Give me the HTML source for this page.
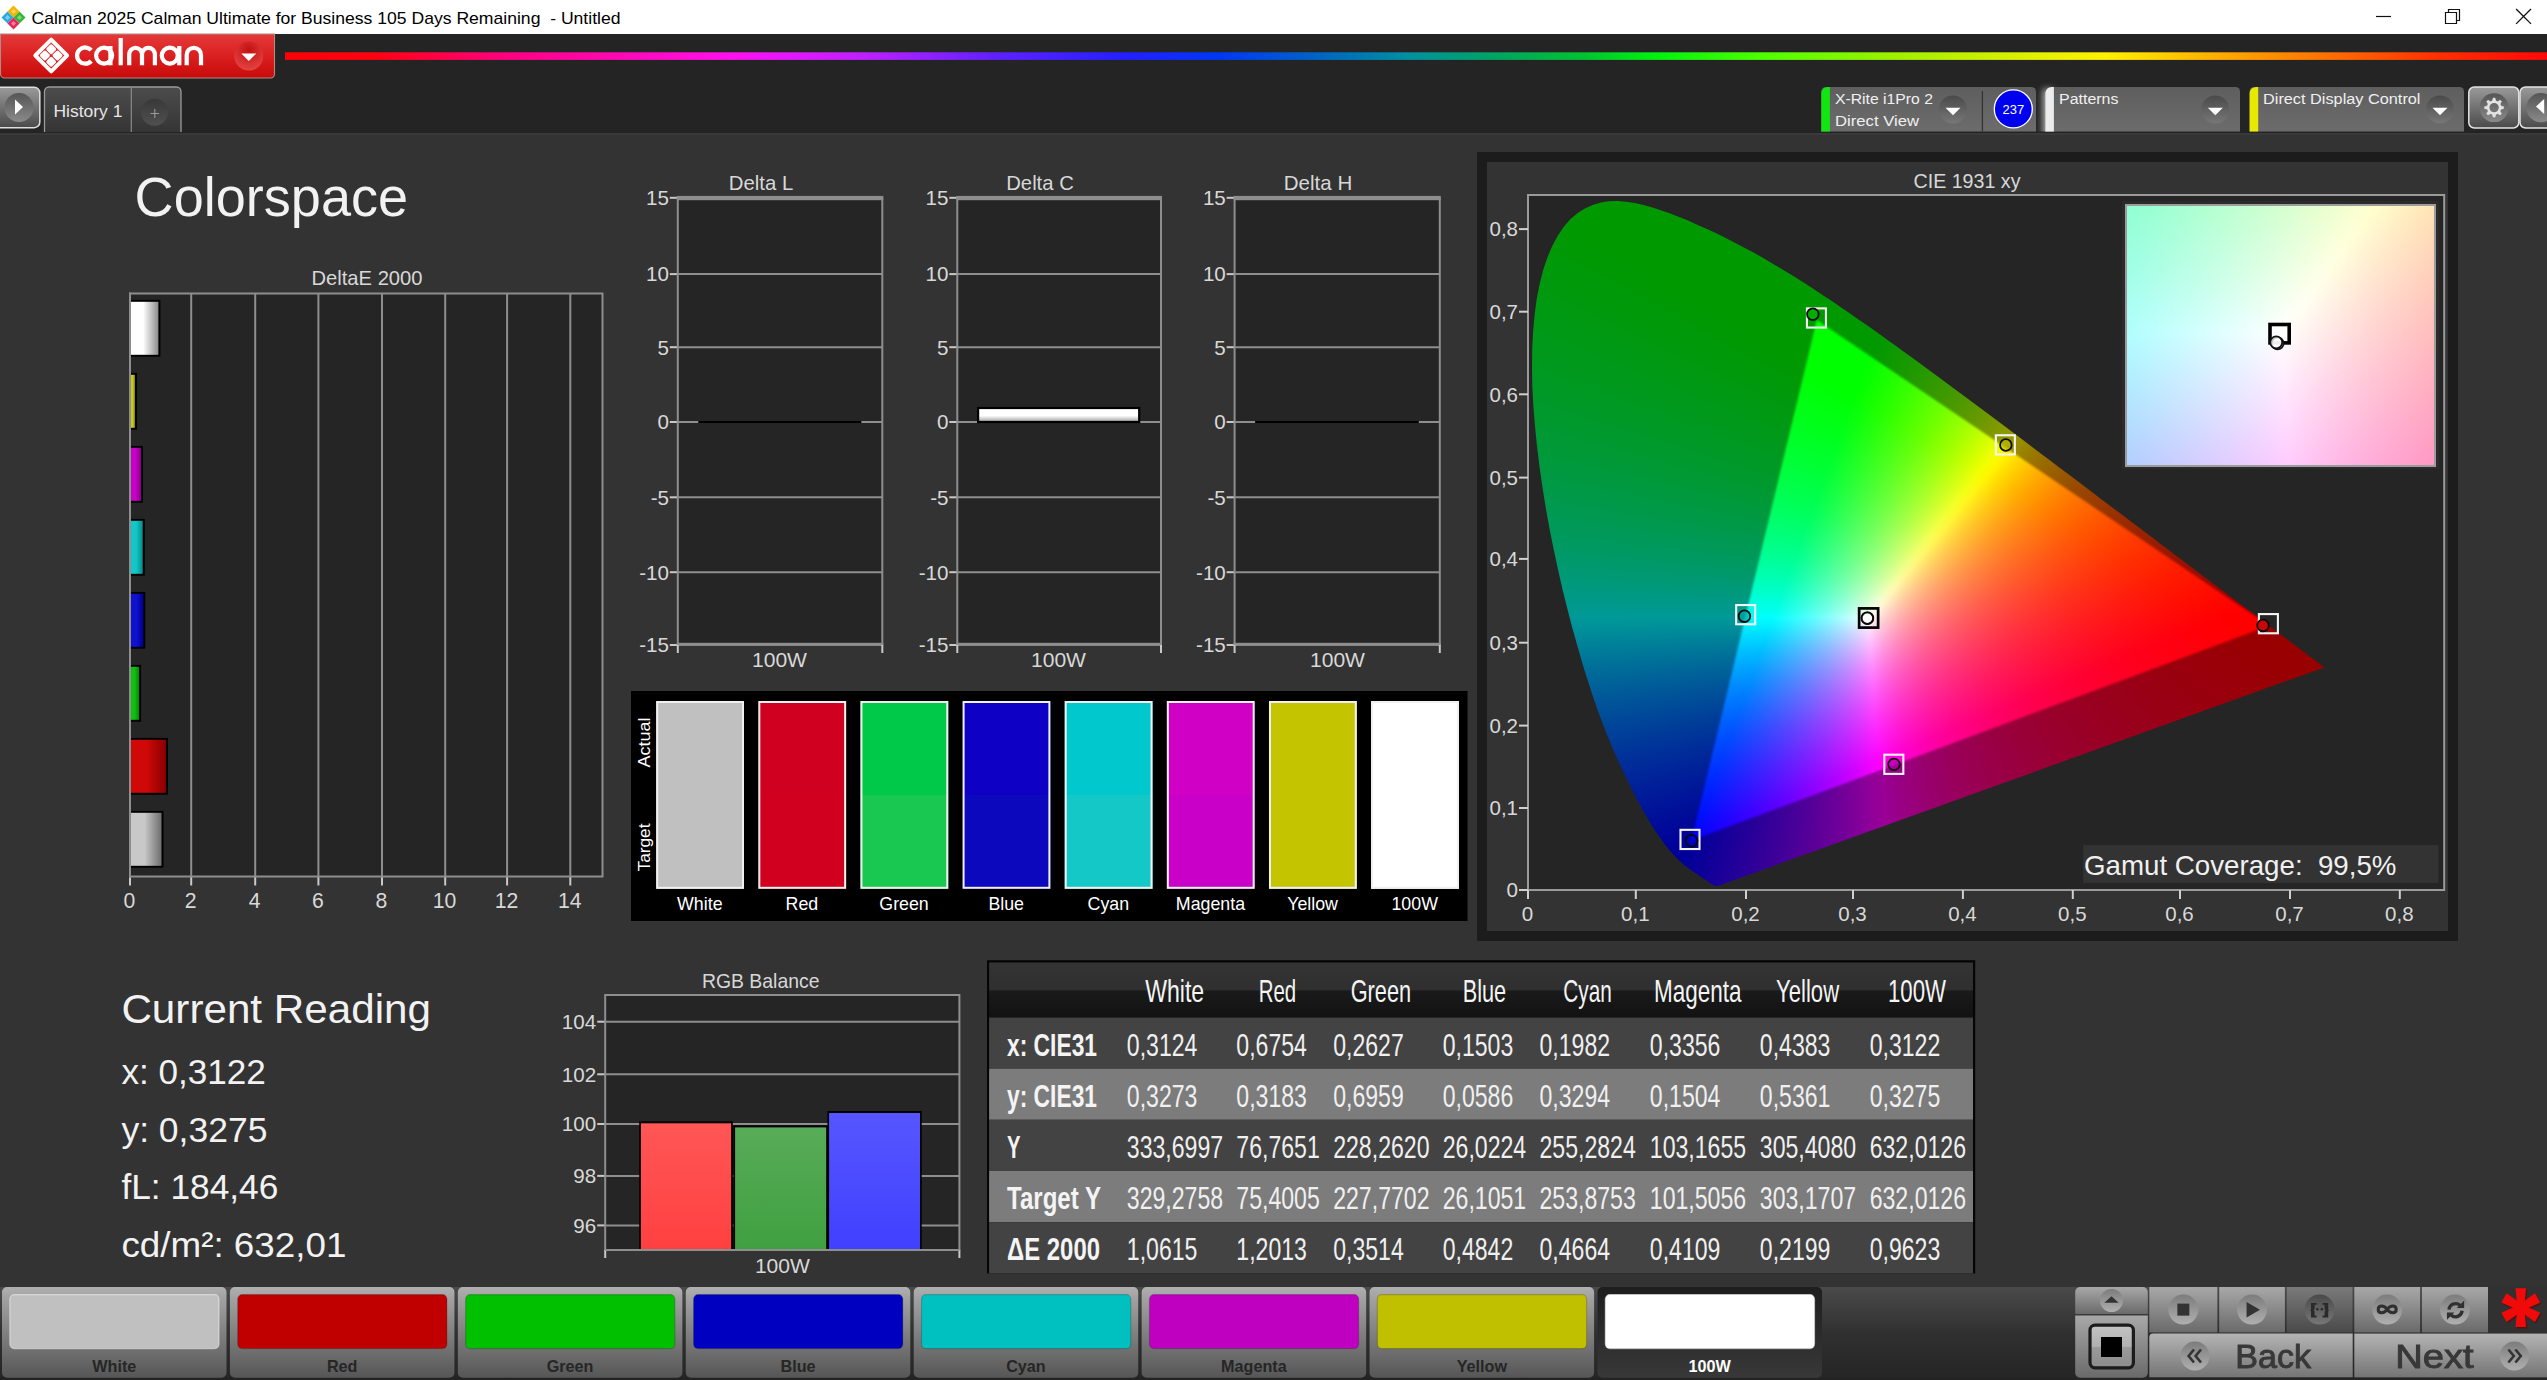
<!DOCTYPE html>
<html><head><meta charset="utf-8"><title>Calman</title>
<style>
html,body{margin:0;padding:0;background:#333;}
body{width:2547px;height:1380px;position:relative;overflow:hidden;font-family:"Liberation Sans", sans-serif;}
#bg div{position:absolute;box-sizing:border-box;}
.cie{background:conic-gradient(at 163.5px 645.4px,#00ffff 0deg,#00ffff 20deg,#08ffff 21deg,#26ffff 24deg,#48ffff 27deg,#6dffff 30deg,#8affff 32deg,#a9ffff 34deg,#ccffff 36deg,#f2ffff 38deg,#ffffff 39deg,#ffffff 200deg,#00ffff 201deg,#00ffff 360deg),conic-gradient(at 327.0px 199.4px,#00ffff 0deg,#00ffff 20deg,#ffffff 21deg,#ffffff 176deg,#f8ffff 177deg,#c6ffff 181deg,#98ffff 185deg,#63ffff 190deg,#27ffff 196deg,#01ffff 200deg,#00ffff 201deg,#00ffff 360deg),conic-gradient(at 163.5px 645.4px,#ffffff 0deg,#ffffff 38deg,#fff6ff 39deg,#ffe3ff 40deg,#ffd1ff 41deg,#ffc1ff 42deg,#ffa4ff 44deg,#ff8cff 46deg,#ff77ff 48deg,#ff5cff 51deg,#ff46ff 54deg,#ff32ff 57deg,#ff1cff 61deg,#ff05ff 66deg,#ff01ff 67deg,#ff00ff 68deg,#ff00ff 247deg,#ffffff 248deg,#ffffff 360deg),conic-gradient(at 697.6px 422.4px,#ffffff 0deg,#ffffff 67deg,#ff00ff 68deg,#ff00ff 247deg,#ff05ff 248deg,#ff25ff 252deg,#ff49ff 256deg,#ff68ff 259deg,#ff8aff 262deg,#ffa4ff 264deg,#ffc0ff 266deg,#ffdfff 268deg,#fff0ff 269deg,#ffffff 270deg,#ffffff 360deg),conic-gradient(at 327.0px 199.4px,#ffff00 0deg,#ffff00 121deg,#ffff1e 134deg,#ffff37 143deg,#ffff4e 150deg,#ffff66 156deg,#ffff7f 161deg,#ffff96 165deg,#ffffab 168deg,#ffffc4 171deg,#ffffd7 173deg,#ffffed 175deg,#fffff9 176deg,#ffffff 177deg,#ffffff 301deg,#ffff00 302deg,#ffff00 360deg),conic-gradient(at 697.6px 422.4px,#ffff00 0deg,#ffff00 121deg,#ffffff 122deg,#ffffff 269deg,#fffffd 270deg,#ffffeb 271deg,#ffffcd 273deg,#ffffb2 275deg,#ffff9b 277deg,#ffff7e 280deg,#ffff64 283deg,#ffff4e 286deg,#ffff35 290deg,#ffff1b 295deg,#ffff00 301deg,#ffff00 360deg),#fff;background-blend-mode:darken;}
.cie2{background:conic-gradient(at -945.8px 1657.2px,#00ffff 0deg,#00ffff 18.2deg,#15ffff 20.2deg,#2effff 22.5deg,#46ffff 24.5deg,#60ffff 26.5deg,#79ffff 28.2deg,#94ffff 30deg,#adffff 31.5deg,#c8ffff 33deg,#e0ffff 34.2deg,#fbffff 35.5deg,#ffffff 35.8deg,#ffffff 198.2deg,#00ffff 198.5deg,#00ffff 360deg),conic-gradient(at 67.3px -1412.3px,#00ffff 0deg,#00ffff 18.2deg,#ffffff 18.5deg,#ffffff 176.8deg,#fcffff 177deg,#d9ffff 179.5deg,#b4ffff 182.2deg,#8fffff 185.2deg,#69ffff 188.5deg,#3fffff 192.2deg,#12ffff 196.5deg,#00ffff 198.2deg,#00ffff 360deg),conic-gradient(at -945.8px 1657.2px,#ffffff 0deg,#ffffff 35.5deg,#fffeff 35.8deg,#ffe9ff 36.8deg,#ffd6ff 37.8deg,#ffc5ff 38.8deg,#ffb2ff 40deg,#ffa1ff 41.2deg,#ff8fff 42.8deg,#ff7fff 44.2deg,#ff6eff 46deg,#ff5cff 48deg,#ff4bff 50.2deg,#ff3bff 52.8deg,#ff2bff 55.5deg,#ff1bff 58.8deg,#ff0aff 62.5deg,#ff00ff 65deg,#ff00ff 65.5deg,#ff00ff 245deg,#ffffff 245.2deg,#ffffff 360deg),conic-gradient(at 2363.8px 122.4px,#ffffff 0deg,#ffffff 65deg,#ff00ff 65.2deg,#ff00ff 245deg,#ff01ff 245.2deg,#ff1cff 249deg,#ff36ff 252.2deg,#ff50ff 255.2deg,#ff6aff 258deg,#ff84ff 260.5deg,#ff9dff 262.8deg,#ffb5ff 264.8deg,#ffd0ff 266.8deg,#ffeaff 268.5deg,#fffdff 269.8deg,#ffffff 270deg,#ffffff 360deg),conic-gradient(at 67.3px -1412.3px,#ffff00 0deg,#ffff00 123.8deg,#ffff14 132.8deg,#ffff26 139.8deg,#ffff36 145.5deg,#ffff46 150.2deg,#ffff56 154.5deg,#ffff66 158deg,#ffff76 161.2deg,#ffff86 164deg,#ffff96 166.5deg,#ffffa7 168.8deg,#ffffb9 170.8deg,#ffffca 172.5deg,#ffffda 174deg,#ffffed 175.5deg,#fffffe 176.8deg,#ffffff 177deg,#ffffff 303.8deg,#ffff00 304deg,#ffff00 360deg),conic-gradient(at 2363.8px 122.4px,#ffff00 0deg,#ffff00 123.8deg,#ffffff 124deg,#ffffff 269.8deg,#fffffd 270deg,#ffffe9 271.2deg,#ffffd4 272.8deg,#ffffc2 274.2deg,#ffffae 276deg,#ffff99 278deg,#ffff85 280.2deg,#ffff72 282.5deg,#ffff5e 285.2deg,#ffff4b 288.2deg,#ffff38 291.5deg,#ffff25 295.2deg,#ffff11 299.5deg,#ffff00 303.8deg,#ffff00 360deg),#fff;background-blend-mode:darken;}
svg{position:absolute;left:0;top:0;}
svg text{font-family:"Liberation Sans", sans-serif;white-space:pre;}
</style></head><body>
<div id="bg">
<div style="left:0px;top:0px;width:2547px;height:34px;background:#ffffff"></div>
<div style="left:0px;top:34px;width:2547px;height:99.2px;background:#242424"></div>
<div style="left:0px;top:133.2px;width:2547px;height:1246.8px;background:#333333"></div>
<div style="left:0px;top:133.2px;width:2547px;height:1.6px;background:#393939"></div>
<div style="left:1477.2px;top:152.2px;width:981px;height:788.6px;background:#1c1c1c"></div>
<div style="left:1486.8px;top:161.8px;width:961.7px;height:768.8px;background:#333333"></div>
<div style="left:1528px;top:195px;width:917px;height:696px;background:#252525"></div>
<div style="left:1528px;top:195px;width:917px;height:696px;filter:blur(0.7px) brightness(0.6);overflow:hidden;"><div class="cie" style="left:0;top:0;width:917px;height:696px;clip-path:polygon(189.8px 690.9px,189.8px 690.9px,189.7px 690.9px,189.7px 690.9px,189.7px 690.9px,189.7px 690.9px,189.6px 690.9px,189.6px 690.9px,189.5px 690.9px,189.5px 690.9px,189.4px 690.9px,189.4px 690.9px,189.3px 690.9px,189.3px 690.9px,189.2px 690.9px,189.2px 690.9px,189.1px 691.0px,189.1px 691.0px,189.0px 691.0px,189.0px 691.0px,188.9px 691.0px,188.9px 691.0px,188.8px 691.1px,188.8px 691.1px,188.7px 691.1px,188.6px 691.1px,188.5px 691.1px,188.4px 691.0px,188.3px 691.0px,188.2px 691.0px,188.1px 691.0px,188.0px 691.0px,187.9px 691.0px,187.8px 691.0px,187.7px 691.0px,187.6px 691.0px,187.5px 691.0px,187.3px 691.0px,187.2px 690.9px,187.0px 690.9px,186.8px 690.8px,186.6px 690.7px,186.4px 690.6px,186.1px 690.5px,185.9px 690.4px,185.6px 690.2px,185.4px 690.1px,185.1px 689.9px,184.8px 689.7px,184.4px 689.5px,184.1px 689.3px,183.7px 689.1px,183.3px 688.8px,182.8px 688.5px,182.4px 688.2px,181.9px 687.9px,181.4px 687.6px,180.9px 687.2px,180.4px 686.9px,179.8px 686.5px,179.2px 686.0px,178.6px 685.6px,177.9px 685.1px,177.2px 684.7px,176.4px 684.1px,175.6px 683.6px,174.7px 683.0px,173.8px 682.4px,172.8px 681.8px,171.8px 681.1px,170.7px 680.4px,169.6px 679.6px,168.4px 678.8px,167.2px 678.0px,165.9px 677.1px,164.6px 676.2px,163.2px 675.2px,161.7px 674.1px,160.2px 673.0px,158.6px 671.8px,156.9px 670.5px,155.2px 669.1px,153.5px 667.6px,151.6px 665.9px,149.7px 664.1px,147.7px 662.1px,145.5px 659.7px,143.2px 657.1px,140.7px 654.2px,138.1px 650.9px,135.3px 647.3px,132.4px 643.3px,129.4px 639.0px,126.2px 634.2px,122.9px 629.0px,119.5px 623.3px,115.8px 617.0px,112.0px 610.0px,108.0px 602.5px,103.9px 594.3px,99.5px 585.4px,94.9px 575.8px,90.1px 565.4px,85.1px 554.2px,80.0px 542.2px,74.9px 529.2px,69.8px 515.4px,64.7px 500.7px,59.6px 485.1px,54.5px 468.7px,49.5px 451.3px,44.4px 433.2px,39.5px 414.2px,34.6px 394.7px,30.0px 374.6px,25.6px 354.1px,21.5px 333.4px,17.7px 312.6px,14.4px 291.7px,11.4px 270.9px,8.9px 250.3px,6.9px 229.9px,5.3px 210.0px,4.3px 190.8px,4.0px 172.1px,4.2px 154.1px,5.1px 136.7px,6.6px 120.0px,8.7px 104.1px,11.6px 89.2px,15.1px 75.3px,19.4px 62.6px,24.2px 51.0px,29.7px 40.7px,35.8px 31.8px,42.3px 24.3px,49.4px 18.2px,56.9px 13.4px,64.7px 9.9px,72.7px 7.5px,81.0px 6.3px,89.4px 6.0px,98.0px 6.7px,106.8px 8.1px,115.6px 10.1px,124.4px 12.6px,133.4px 15.4px,142.3px 18.6px,151.2px 22.0px,160.0px 25.6px,168.6px 29.4px,177.2px 33.2px,185.6px 37.1px,193.9px 41.1px,202.1px 45.2px,210.2px 49.4px,218.3px 53.7px,226.4px 58.1px,234.4px 62.6px,242.3px 67.2px,250.3px 71.9px,258.2px 76.7px,266.1px 81.6px,274.0px 86.6px,281.8px 91.6px,289.7px 96.7px,297.5px 101.9px,305.3px 107.1px,313.1px 112.4px,321.0px 117.8px,328.7px 123.2px,336.5px 128.6px,344.3px 134.1px,352.1px 139.6px,359.9px 145.2px,367.7px 150.8px,375.5px 156.4px,383.3px 162.1px,391.1px 167.8px,398.9px 173.5px,406.7px 179.2px,414.5px 184.9px,422.2px 190.7px,430.0px 196.5px,437.8px 202.2px,445.5px 208.0px,453.3px 213.8px,461.0px 219.5px,468.7px 225.3px,476.4px 231.1px,484.0px 236.8px,491.7px 242.5px,499.3px 248.3px,506.8px 254.0px,514.4px 259.7px,521.9px 265.3px,529.3px 270.9px,536.7px 276.5px,544.1px 282.1px,551.4px 287.6px,558.6px 293.1px,565.8px 298.5px,572.9px 303.9px,580.0px 309.2px,586.9px 314.4px,593.8px 319.6px,600.6px 324.8px,607.3px 329.8px,614.0px 334.8px,620.5px 339.7px,626.9px 344.6px,633.2px 349.4px,639.4px 354.1px,645.5px 358.7px,651.4px 363.1px,657.2px 367.5px,662.8px 371.7px,668.1px 375.8px,673.4px 379.7px,678.5px 383.6px,683.5px 387.3px,688.4px 391.0px,693.1px 394.6px,697.8px 398.1px,702.3px 401.5px,706.6px 404.7px,710.7px 407.9px,714.7px 410.8px,718.5px 413.7px,722.2px 416.5px,725.7px 419.1px,729.1px 421.7px,732.3px 424.1px,735.4px 426.5px,738.4px 428.7px,741.3px 430.9px,744.0px 433.0px,746.6px 434.9px,749.1px 436.8px,751.5px 438.6px,753.7px 440.3px,755.9px 441.9px,758.0px 443.5px,760.0px 445.0px,761.8px 446.4px,763.7px 447.8px,765.4px 449.1px,767.0px 450.3px,768.6px 451.5px,770.2px 452.7px,771.6px 453.8px,773.1px 454.9px,774.4px 455.9px,775.8px 456.9px,777.1px 457.9px,778.3px 458.8px,779.5px 459.7px,780.6px 460.6px,781.7px 461.4px,782.7px 462.2px,783.7px 462.9px,784.7px 463.7px,785.6px 464.4px,786.5px 465.0px,787.3px 465.7px,788.1px 466.2px,788.8px 466.8px,789.5px 467.3px,790.2px 467.8px,790.8px 468.2px,791.3px 468.7px,791.9px 469.1px,792.4px 469.5px,792.9px 469.9px,793.4px 470.2px,793.8px 470.6px,794.2px 470.9px,794.6px 471.2px,795.0px 471.5px,795.3px 471.7px,795.7px 472.0px,796.0px 472.2px,796.2px 472.4px);"></div></div>
<div style="left:1528px;top:195px;width:917px;height:696px;filter:blur(1.1px);overflow:hidden;"><div class="cie" style="left:0;top:0;width:917px;height:696px;clip-path:polygon(741.2px 430.7px,288.8px 125.1px,163.5px 645.4px);"></div></div>
<div style="left:2122.2px;top:201.2px;width:316.4px;height:268.2px;background:#2b2b2b"></div>
<div style="left:2124.7px;top:203.9px;width:311.4px;height:262.8px;background:#9c9c9c"></div>
<div class="cie2" style="left:2126.5px;top:205.7px;width:307.8px;height:259.2px;"></div>
</div>
<svg width="2547" height="1380" viewBox="0 0 2547 1380">
<defs>
<linearGradient id="gRed" x1="0" y1="0" x2="0" y2="1"><stop offset="0" stop-color="#e43a3a"/><stop offset="0.45" stop-color="#dc2222"/><stop offset="1" stop-color="#c80a0a"/></linearGradient>
<radialGradient id="gRedC" cx="0.5" cy="0.3" r="0.7"><stop offset="0" stop-color="#c41010"/><stop offset="1" stop-color="#e44444"/></radialGradient>
<linearGradient id="gRain" x1="0" y1="0" x2="1" y2="0"><stop offset="0" stop-color="#ff0008"/><stop offset="0.04" stop-color="#ff0010"/><stop offset="0.097" stop-color="#ff0080"/><stop offset="0.15" stop-color="#ff08b8"/><stop offset="0.196" stop-color="#ff10ec"/><stop offset="0.225" stop-color="#e018ff"/><stop offset="0.255" stop-color="#c020ff"/><stop offset="0.314" stop-color="#6020ff"/><stop offset="0.374" stop-color="#2020ff"/><stop offset="0.413" stop-color="#0038f4"/><stop offset="0.453" stop-color="#0060c8"/><stop offset="0.496" stop-color="#0090a0"/><stop offset="0.536" stop-color="#00a460"/><stop offset="0.575" stop-color="#00c430"/><stop offset="0.605" stop-color="#00f010"/><stop offset="0.654" stop-color="#50ff00"/><stop offset="0.714" stop-color="#a0f000"/><stop offset="0.763" stop-color="#d8f000"/><stop offset="0.805" stop-color="#fff000"/><stop offset="0.852" stop-color="#ffb000"/><stop offset="0.902" stop-color="#ff7000"/><stop offset="0.951" stop-color="#ff3000"/><stop offset="1" stop-color="#ff0808"/></linearGradient>
<linearGradient id="gBtn" x1="0" y1="0" x2="0" y2="1"><stop offset="0" stop-color="#9a9a9a"/><stop offset="1" stop-color="#4a4a4a"/></linearGradient>
<linearGradient id="gCirc" x1="0" y1="0" x2="0" y2="1"><stop offset="0" stop-color="#555"/><stop offset="1" stop-color="#8a8a8a"/></linearGradient>
<linearGradient id="gPlus" x1="0" y1="0" x2="0" y2="1"><stop offset="0" stop-color="#383838"/><stop offset="1" stop-color="#505050"/></linearGradient>
<linearGradient id="gTab" x1="0" y1="0" x2="0" y2="1"><stop offset="0" stop-color="#4c4c4c"/><stop offset="1" stop-color="#353535"/></linearGradient>
<linearGradient id="gPan" x1="0" y1="0" x2="0" y2="1"><stop offset="0" stop-color="#5e5e5e"/><stop offset="1" stop-color="#6c6c6c"/></linearGradient>
<linearGradient id="gDrop" x1="0" y1="0" x2="0" y2="1"><stop offset="0" stop-color="#4a4a4a"/><stop offset="1" stop-color="#777"/></linearGradient>
<filter id="blur4" x="-1" y="-1" width="3" height="3"><feGaussianBlur stdDeviation="3.5"/></filter>
<clipPath id="cpGlow"><rect x="2030" y="70" width="40" height="61.5"/></clipPath>
<linearGradient id="gb0" x1="0" y1="0" x2="1" y2="0"><stop offset="0" stop-color="#ffffff"/><stop offset="0.45" stop-color="#ffffff"/><stop offset="1" stop-color="#8c8c8c"/></linearGradient>
<linearGradient id="gb1" x1="0" y1="0" x2="1" y2="0"><stop offset="0" stop-color="#c8c820"/><stop offset="0.45" stop-color="#c8c820"/><stop offset="1" stop-color="#8a8a10"/></linearGradient>
<linearGradient id="gb2" x1="0" y1="0" x2="1" y2="0"><stop offset="0" stop-color="#c800c8"/><stop offset="0.45" stop-color="#c800c8"/><stop offset="1" stop-color="#8a008a"/></linearGradient>
<linearGradient id="gb3" x1="0" y1="0" x2="1" y2="0"><stop offset="0" stop-color="#10c8c8"/><stop offset="0.45" stop-color="#10c8c8"/><stop offset="1" stop-color="#0a8a8a"/></linearGradient>
<linearGradient id="gb4" x1="0" y1="0" x2="1" y2="0"><stop offset="0" stop-color="#1010d0"/><stop offset="0.45" stop-color="#1010d0"/><stop offset="1" stop-color="#00008a"/></linearGradient>
<linearGradient id="gb5" x1="0" y1="0" x2="1" y2="0"><stop offset="0" stop-color="#10c010"/><stop offset="0.45" stop-color="#10c010"/><stop offset="1" stop-color="#0a860a"/></linearGradient>
<linearGradient id="gb6" x1="0" y1="0" x2="1" y2="0"><stop offset="0" stop-color="#d00808"/><stop offset="0.45" stop-color="#d00808"/><stop offset="1" stop-color="#8a0000"/></linearGradient>
<linearGradient id="gb7" x1="0" y1="0" x2="1" y2="0"><stop offset="0" stop-color="#c8c8c8"/><stop offset="0.45" stop-color="#c8c8c8"/><stop offset="1" stop-color="#6e6e6e"/></linearGradient>
<linearGradient id="gWb" x1="0" y1="0" x2="0" y2="1"><stop offset="0" stop-color="#fff"/><stop offset="0.55" stop-color="#fff"/><stop offset="1" stop-color="#9a9a9a"/></linearGradient>
<linearGradient id="grb0" x1="0" y1="0" x2="0" y2="1"><stop offset="0" stop-color="#ff5656"/><stop offset="1" stop-color="#ff4040"/></linearGradient>
<linearGradient id="grb1" x1="0" y1="0" x2="0" y2="1"><stop offset="0" stop-color="#58ac58"/><stop offset="1" stop-color="#40a040"/></linearGradient>
<linearGradient id="grb2" x1="0" y1="0" x2="0" y2="1"><stop offset="0" stop-color="#5656ff"/><stop offset="1" stop-color="#4040ff"/></linearGradient>
<linearGradient id="gTh" x1="0" y1="0" x2="0" y2="1"><stop offset="0" stop-color="#343434"/><stop offset="0.5" stop-color="#2f2f2f"/><stop offset="0.515" stop-color="#1a1a1a"/><stop offset="1" stop-color="#121212"/></linearGradient>
<linearGradient id="gBar" x1="0" y1="0" x2="0" y2="1"><stop offset="0" stop-color="#4a4a4a"/><stop offset="0.5" stop-color="#303030"/><stop offset="1" stop-color="#252525"/></linearGradient>
<linearGradient id="gCb" x1="0" y1="0" x2="0" y2="1"><stop offset="0" stop-color="#b0b0b0"/><stop offset="0.12" stop-color="#a2a2a2"/><stop offset="1" stop-color="#565656"/></linearGradient>
<linearGradient id="gCbSel" x1="0" y1="0" x2="0" y2="1"><stop offset="0" stop-color="#1e1e1e"/><stop offset="1" stop-color="#383838"/></linearGradient>
<linearGradient id="gCt" x1="0" y1="0" x2="0" y2="1"><stop offset="0" stop-color="#a8a8a8"/><stop offset="1" stop-color="#6a6a6a"/></linearGradient>
<linearGradient id="gCtD" x1="0" y1="0" x2="0" y2="1"><stop offset="0" stop-color="#7a7a7a"/><stop offset="1" stop-color="#4a4a4a"/></linearGradient>
<linearGradient id="gCtB" x1="0" y1="0" x2="0" y2="1"><stop offset="0" stop-color="#b4b4b4"/><stop offset="1" stop-color="#747474"/></linearGradient>
<linearGradient id="gKn" x1="0" y1="0" x2="0" y2="1"><stop offset="0" stop-color="#7c7c7c"/><stop offset="1" stop-color="#b0b0b0"/></linearGradient>
<linearGradient id="gSq" x1="0" y1="0" x2="0" y2="1"><stop offset="0" stop-color="#c4c4c4"/><stop offset="0.5" stop-color="#b0b0b0"/><stop offset="0.52" stop-color="#9a9a9a"/><stop offset="1" stop-color="#8c8c8c"/></linearGradient>
<filter id="blur1"><feGaussianBlur stdDeviation="0.7"/></filter>
</defs>
<g transform="translate(13.5,17)"><path d="M0,-11.5 L6,-5.5 L0,0.5 L-6,-5.5Z" fill="#f5b400"/><path d="M-6,-5.5 L0,0.5 L-6,6.5 L-12,0.5Z" fill="#29a9e0"/><path d="M6,-5.5 L12,0.5 L6,6.5 L0,0.5Z" fill="#35b535"/><path d="M0,0.5 L6,6.5 L0,12.5 L-6,6.5Z" fill="#e8255a"/><path d="M0,-8 L2.6,-5.5 L0,-3 L-2.6,-5.5Z" fill="#f9d56a"/><path d="M-6,-2 L-3.4,0.5 L-6,3 L-8.6,0.5Z" fill="#7fcdee"/><path d="M6,-2 L8.6,0.5 L6,3 L3.4,0.5Z" fill="#7fd67f"/><path d="M0,4 L2.6,6.5 L0,9 L-2.6,6.5Z" fill="#f27a9a"/></g>
<text x="31.5" y="23.8" font-size="17" fill="#000" textLength="589" lengthAdjust="spacingAndGlyphs">Calman 2025 Calman Ultimate for Business 105 Days Remaining  - Untitled</text>
<line x1="2376" y1="16.5" x2="2391" y2="16.5" stroke="#111" stroke-width="1.2" />
<path d="M2445.5,12.5 h11 v11 h-11z M2448.5,12.5 v-3 h11 v11 h-3" fill="none" stroke="#111" stroke-width="1.2"/>
<path d="M2516.1,9 l14.9,14.9 M2531,9 l-14.9,14.9" fill="none" stroke="#111" stroke-width="1.3"/>
<path d="M0.5,34 H274.5 V74 a4,4 0 0 1 -4,4 H4.5 a4,4 0 0 1 -4,-4Z" fill="url(#gRed)" stroke="#b08a84" stroke-width="1.1"/>
<path d="M51.2,39.6 L67.1,55.5 L51.2,71.4 L35.3,55.5Z" fill="none" stroke="#fff" stroke-width="3.9" stroke-linejoin="round"/>
<rect x="-3.95" y="-3.95" width="7.9" height="7.9" rx="1.6" transform="translate(51.2,49.2) rotate(45)" fill="#fff"/>
<rect x="-3.95" y="-3.95" width="7.9" height="7.9" rx="1.6" transform="translate(44.9,55.5) rotate(45)" fill="#fff"/>
<rect x="-3.95" y="-3.95" width="7.9" height="7.9" rx="1.6" transform="translate(57.5,55.5) rotate(45)" fill="#fff"/>
<rect x="-3.95" y="-3.95" width="7.9" height="7.9" rx="1.6" transform="translate(51.2,61.8) rotate(45)" fill="#fff"/>
<g fill="none" stroke="#fff" stroke-width="4.25" stroke-linecap="butt" stroke-linejoin="round"><path d="M91.2,50.2 A8.1,8.1 0 1 0 91.2,61.0"/><circle cx="104.1" cy="55.6" r="8.0"/><path d="M110.4,46 V65.3"/><path d="M120.7,38 V65.3"/><path d="M129.2,65.3 V54.2 a6.4,6.4 0 0 1 12.8,0 V65.3 M142,54.2 a6.45,6.4 0 0 1 12.9,0 V65.3"/><circle cx="169.8" cy="55.6" r="8.0"/><path d="M179.3,46 V65.3"/><path d="M186.7,65.3 V54.9 a7.15,7.15 0 0 1 14.3,0 V65.3"/></g>
<circle cx="248.8" cy="56" r="14.5" fill="url(#gRedC)"/>
<path d="M241.3,53.4 h15 l-7.5,7.6z" fill="#fff"/>
<rect x="285" y="52.3" width="2262" height="7.6" fill="url(#gRain)"/>
<rect x="-6" y="87.3" width="45.8" height="40.4" fill="url(#gBtn)" stroke="#dedede" stroke-width="1.5" rx="5.5"/>
<circle cx="19" cy="107.5" r="14.5" fill="url(#gCirc)"/>
<path d="M15,99.5 v15 l8,-7.5z" fill="#fff"/>
<path d="M44.5,132 V91.5 a4.5,4.5 0 0 1 4.5,-4.5 H176.5 a4.5,4.5 0 0 1 4.5,4.5 V132" fill="url(#gTab)" stroke="#9a9a9a" stroke-width="1.3"/>
<line x1="131.3" y1="88" x2="131.3" y2="132" stroke="#8a8a8a" stroke-width="1.2" />
<text x="53.4" y="116.8" font-size="16.8" fill="#e6e6e6" textLength="69" lengthAdjust="spacingAndGlyphs">History 1</text>
<circle cx="154.5" cy="112.2" r="13.5" fill="url(#gPlus)"/>
<path d="M150.5,113.5 h8.6 M154.8,109 v9" stroke="#9a9a9a" stroke-width="1.1" fill="none"/>
<path d="M1821.3,131.5 V91.4 a4.5,4.5 0 0 1 4.5,-4.5 H2031.5 a4.5,4.5 0 0 1 4.5,4.5 V131.5Z" fill="url(#gPan)"/>
<path d="M1821.3,131.5 V93.4 a6.5,6.5 0 0 1 6.5,-6.5 H1829.8999999999999 V131.5Z" fill="#12e612"/>
<text x="1835" y="103.8" font-size="15.3" fill="#f0f0f0" textLength="98" lengthAdjust="spacingAndGlyphs">X-Rite i1Pro 2</text>
<text x="1835" y="125.8" font-size="15.3" fill="#f0f0f0" textLength="84" lengthAdjust="spacingAndGlyphs">Direct View</text>
<circle cx="1953" cy="109.5" r="14" fill="url(#gDrop)"/>
<path d="M1945.5,107.7 h15 l-7.5,7.6z" fill="#fff"/>
<line x1="1982.4" y1="91" x2="1982.4" y2="131.5" stroke="#333" stroke-width="1.3" />
<circle cx="2013.3" cy="108.9" r="19" fill="#0000f0" stroke="#fff" stroke-width="1.3"/>
<text x="2013.3" y="113.6" font-size="13.2" fill="#fff" text-anchor="middle" textLength="21.6" lengthAdjust="spacingAndGlyphs">237</text>
<g clip-path="url(#cpGlow)"><rect x="2043" y="89" width="10" height="50" fill="#ddd" filter="url(#blur4)" opacity="0.8"/></g>
<path d="M2045.3,131.5 V91.4 a4.5,4.5 0 0 1 4.5,-4.5 H2235.5 a4.5,4.5 0 0 1 4.5,4.5 V131.5Z" fill="url(#gPan)"/>
<path d="M2045.3,131.5 V93.4 a6.5,6.5 0 0 1 6.5,-6.5 H2053.9 V131.5Z" fill="#ececec"/>
<text x="2059" y="103.7" font-size="15.3" fill="#f0f0f0" textLength="59.5" lengthAdjust="spacingAndGlyphs">Patterns</text>
<circle cx="2215.3" cy="109.5" r="14" fill="url(#gDrop)"/>
<path d="M2207.8,107.7 h15 l-7.5,7.6z" fill="#fff"/>
<path d="M2249.6,131.5 V91.4 a4.5,4.5 0 0 1 4.5,-4.5 H2459.5 a4.5,4.5 0 0 1 4.5,4.5 V131.5Z" fill="url(#gPan)"/>
<path d="M2249.6,131.5 V93.4 a6.5,6.5 0 0 1 6.5,-6.5 H2258.2 V131.5Z" fill="#e8e800"/>
<text x="2263" y="103.7" font-size="15.3" fill="#f0f0f0" textLength="157.5" lengthAdjust="spacingAndGlyphs">Direct Display Control</text>
<circle cx="2440" cy="109.5" r="14" fill="url(#gDrop)"/>
<path d="M2432.5,107.7 h15 l-7.5,7.6z" fill="#fff"/>
<rect x="2468.8" y="87" width="50" height="41" fill="url(#gBtn)" stroke="#e2e2e2" stroke-width="1.5" rx="5.5"/>
<circle cx="2494.1" cy="107.7" r="14.4" fill="url(#gCirc)"/>
<g transform="translate(2494.1,107.6)"><path d="M-1.7,-6.6 L-0.9,-9.5 H0.9 L1.7,-6.6Z" transform="rotate(0)" fill="#e4e4e4" stroke="#e4e4e4" stroke-width="0.6" stroke-linejoin="round"/><path d="M-1.7,-6.6 L-0.9,-9.5 H0.9 L1.7,-6.6Z" transform="rotate(45)" fill="#e4e4e4" stroke="#e4e4e4" stroke-width="0.6" stroke-linejoin="round"/><path d="M-1.7,-6.6 L-0.9,-9.5 H0.9 L1.7,-6.6Z" transform="rotate(90)" fill="#e4e4e4" stroke="#e4e4e4" stroke-width="0.6" stroke-linejoin="round"/><path d="M-1.7,-6.6 L-0.9,-9.5 H0.9 L1.7,-6.6Z" transform="rotate(135)" fill="#e4e4e4" stroke="#e4e4e4" stroke-width="0.6" stroke-linejoin="round"/><path d="M-1.7,-6.6 L-0.9,-9.5 H0.9 L1.7,-6.6Z" transform="rotate(180)" fill="#e4e4e4" stroke="#e4e4e4" stroke-width="0.6" stroke-linejoin="round"/><path d="M-1.7,-6.6 L-0.9,-9.5 H0.9 L1.7,-6.6Z" transform="rotate(225)" fill="#e4e4e4" stroke="#e4e4e4" stroke-width="0.6" stroke-linejoin="round"/><path d="M-1.7,-6.6 L-0.9,-9.5 H0.9 L1.7,-6.6Z" transform="rotate(270)" fill="#e4e4e4" stroke="#e4e4e4" stroke-width="0.6" stroke-linejoin="round"/><path d="M-1.7,-6.6 L-0.9,-9.5 H0.9 L1.7,-6.6Z" transform="rotate(315)" fill="#e4e4e4" stroke="#e4e4e4" stroke-width="0.6" stroke-linejoin="round"/><circle r="5.95" fill="none" stroke="#e4e4e4" stroke-width="2.5"/></g>
<rect x="2520" y="87" width="50" height="41" fill="url(#gBtn)" stroke="#e2e2e2" stroke-width="1.5" rx="5.5"/>
<circle cx="2541" cy="107.7" r="14.6" fill="url(#gCirc)"/>
<path d="M2544.2,99 V114 L2536,106.5Z" fill="#fff"/>
<text x="134.6" y="215.8" font-size="56.2" fill="#f2f2f2" textLength="273.5" lengthAdjust="spacingAndGlyphs">Colorspace</text>
<text x="311.5" y="285.2" font-size="20.6" fill="#d8d8d8" textLength="111" lengthAdjust="spacingAndGlyphs">DeltaE 2000</text>
<rect x="130" y="293.5" width="472.5" height="583" fill="#252525"/>
<line x1="130" y1="876.5" x2="130" y2="885.5" stroke="#c8c8c8" stroke-width="2" />
<text x="129.4" y="907.6" font-size="21.2" fill="#d8d8d8" text-anchor="middle">0</text>
<line x1="191.2" y1="293.5" x2="191.2" y2="876.5" stroke="#8e8e8e" stroke-width="2" />
<line x1="191.2" y1="876.5" x2="191.2" y2="885.5" stroke="#c8c8c8" stroke-width="2" />
<text x="190.6" y="907.6" font-size="21.2" fill="#d8d8d8" text-anchor="middle">2</text>
<line x1="255.2" y1="293.5" x2="255.2" y2="876.5" stroke="#8e8e8e" stroke-width="2" />
<line x1="255.2" y1="876.5" x2="255.2" y2="885.5" stroke="#c8c8c8" stroke-width="2" />
<text x="254.6" y="907.6" font-size="21.2" fill="#d8d8d8" text-anchor="middle">4</text>
<line x1="318.4" y1="293.5" x2="318.4" y2="876.5" stroke="#8e8e8e" stroke-width="2" />
<line x1="318.4" y1="876.5" x2="318.4" y2="885.5" stroke="#c8c8c8" stroke-width="2" />
<text x="317.8" y="907.6" font-size="21.2" fill="#d8d8d8" text-anchor="middle">6</text>
<line x1="382" y1="293.5" x2="382" y2="876.5" stroke="#8e8e8e" stroke-width="2" />
<line x1="382" y1="876.5" x2="382" y2="885.5" stroke="#c8c8c8" stroke-width="2" />
<text x="381.4" y="907.6" font-size="21.2" fill="#d8d8d8" text-anchor="middle">8</text>
<line x1="445.2" y1="293.5" x2="445.2" y2="876.5" stroke="#8e8e8e" stroke-width="2" />
<line x1="445.2" y1="876.5" x2="445.2" y2="885.5" stroke="#c8c8c8" stroke-width="2" />
<text x="444.6" y="907.6" font-size="21.2" fill="#d8d8d8" text-anchor="middle">10</text>
<line x1="507.1" y1="293.5" x2="507.1" y2="876.5" stroke="#8e8e8e" stroke-width="2" />
<line x1="507.1" y1="876.5" x2="507.1" y2="885.5" stroke="#c8c8c8" stroke-width="2" />
<text x="506.5" y="907.6" font-size="21.2" fill="#d8d8d8" text-anchor="middle">12</text>
<line x1="570.3" y1="293.5" x2="570.3" y2="876.5" stroke="#8e8e8e" stroke-width="2" />
<line x1="570.3" y1="876.5" x2="570.3" y2="885.5" stroke="#c8c8c8" stroke-width="2" />
<text x="569.7" y="907.6" font-size="21.2" fill="#d8d8d8" text-anchor="middle">14</text>
<rect x="130" y="293.5" width="472.5" height="583" fill="none" stroke="#8e8e8e" stroke-width="2"/>
<rect x="130" y="299.9" width="30.38" height="56.8" fill="#000"/>
<rect x="130.8" y="301.8" width="27.58" height="53" fill="url(#gb0)"/>
<rect x="130" y="372.9" width="6.94" height="56.8" fill="#000"/>
<rect x="130.8" y="374.8" width="4.14" height="53" fill="url(#gb1)"/>
<rect x="130" y="445.9" width="12.97" height="56.8" fill="#000"/>
<rect x="130.8" y="447.8" width="10.17" height="53" fill="url(#gb2)"/>
<rect x="130" y="518.9" width="14.72" height="56.8" fill="#000"/>
<rect x="130.8" y="520.8" width="11.92" height="53" fill="url(#gb3)"/>
<rect x="130" y="591.9" width="15.29" height="56.8" fill="#000"/>
<rect x="130.8" y="593.8" width="12.49" height="53" fill="url(#gb4)"/>
<rect x="130" y="664.9" width="11.09" height="56.8" fill="#000"/>
<rect x="130.8" y="666.8" width="8.29" height="53" fill="url(#gb5)"/>
<rect x="130" y="737.9" width="37.93" height="56.8" fill="#000"/>
<rect x="130.8" y="739.8" width="35.13" height="53" fill="url(#gb6)"/>
<rect x="130" y="810.9" width="33.51" height="56.8" fill="#000"/>
<rect x="130.8" y="812.8" width="30.71" height="53" fill="url(#gb7)"/>
<line x1="130" y1="292.5" x2="130" y2="877.5" stroke="#8e8e8e" stroke-width="2" />
<rect x="677.8" y="197.8" width="204.5" height="447.2" fill="#252525"/>
<line x1="669.8" y1="197.8" x2="677.8" y2="197.8" stroke="#c8c8c8" stroke-width="2" />
<text x="669" y="205.1" font-size="20.6" fill="#d8d8d8" text-anchor="end">15</text>
<line x1="677.8" y1="274.1" x2="882.3" y2="274.1" stroke="#8e8e8e" stroke-width="2" />
<line x1="669.8" y1="274.1" x2="677.8" y2="274.1" stroke="#c8c8c8" stroke-width="2" />
<text x="669" y="281.4" font-size="20.6" fill="#d8d8d8" text-anchor="end">10</text>
<line x1="677.8" y1="347.2" x2="882.3" y2="347.2" stroke="#8e8e8e" stroke-width="2" />
<line x1="669.8" y1="347.2" x2="677.8" y2="347.2" stroke="#c8c8c8" stroke-width="2" />
<text x="669" y="354.5" font-size="20.6" fill="#d8d8d8" text-anchor="end">5</text>
<line x1="677.8" y1="422" x2="882.3" y2="422" stroke="#8e8e8e" stroke-width="2" />
<line x1="669.8" y1="422" x2="677.8" y2="422" stroke="#c8c8c8" stroke-width="2" />
<text x="669" y="429.3" font-size="20.6" fill="#d8d8d8" text-anchor="end">0</text>
<line x1="677.8" y1="497.3" x2="882.3" y2="497.3" stroke="#8e8e8e" stroke-width="2" />
<line x1="669.8" y1="497.3" x2="677.8" y2="497.3" stroke="#c8c8c8" stroke-width="2" />
<text x="669" y="504.6" font-size="20.6" fill="#d8d8d8" text-anchor="end">-5</text>
<line x1="677.8" y1="572.2" x2="882.3" y2="572.2" stroke="#8e8e8e" stroke-width="2" />
<line x1="669.8" y1="572.2" x2="677.8" y2="572.2" stroke="#c8c8c8" stroke-width="2" />
<text x="669" y="579.5" font-size="20.6" fill="#d8d8d8" text-anchor="end">-10</text>
<line x1="669.8" y1="645" x2="677.8" y2="645" stroke="#c8c8c8" stroke-width="2" />
<text x="669" y="652.3" font-size="20.6" fill="#d8d8d8" text-anchor="end">-15</text>
<line x1="677.8" y1="197.8" x2="677.8" y2="645" stroke="#8e8e8e" stroke-width="2" />
<line x1="882.3" y1="197.8" x2="882.3" y2="645" stroke="#8e8e8e" stroke-width="2" />
<rect x="676.8" y="195.9" width="206.5" height="4.3" fill="#8e8e8e"/>
<rect x="676.8" y="642.8" width="206.5" height="3.1" fill="#8e8e8e"/>
<line x1="677.8" y1="645" x2="677.8" y2="653" stroke="#c8c8c8" stroke-width="2" />
<line x1="882.3" y1="645" x2="882.3" y2="653" stroke="#c8c8c8" stroke-width="2" />
<text x="761" y="190.2" font-size="20.6" fill="#d8d8d8" text-anchor="middle" textLength="64.5" lengthAdjust="spacingAndGlyphs">Delta L</text>
<text x="779.5" y="666.8" font-size="20.6" fill="#d8d8d8" text-anchor="middle" textLength="55" lengthAdjust="spacingAndGlyphs">100W</text>
<line x1="698.3" y1="422" x2="861.3" y2="422" stroke="#000" stroke-width="2" />
<rect x="957.3" y="197.8" width="203.7" height="447.2" fill="#252525"/>
<line x1="949.3" y1="197.8" x2="957.3" y2="197.8" stroke="#c8c8c8" stroke-width="2" />
<text x="948.5" y="205.1" font-size="20.6" fill="#d8d8d8" text-anchor="end">15</text>
<line x1="957.3" y1="274.1" x2="1161" y2="274.1" stroke="#8e8e8e" stroke-width="2" />
<line x1="949.3" y1="274.1" x2="957.3" y2="274.1" stroke="#c8c8c8" stroke-width="2" />
<text x="948.5" y="281.4" font-size="20.6" fill="#d8d8d8" text-anchor="end">10</text>
<line x1="957.3" y1="347.2" x2="1161" y2="347.2" stroke="#8e8e8e" stroke-width="2" />
<line x1="949.3" y1="347.2" x2="957.3" y2="347.2" stroke="#c8c8c8" stroke-width="2" />
<text x="948.5" y="354.5" font-size="20.6" fill="#d8d8d8" text-anchor="end">5</text>
<line x1="957.3" y1="422" x2="1161" y2="422" stroke="#8e8e8e" stroke-width="2" />
<line x1="949.3" y1="422" x2="957.3" y2="422" stroke="#c8c8c8" stroke-width="2" />
<text x="948.5" y="429.3" font-size="20.6" fill="#d8d8d8" text-anchor="end">0</text>
<line x1="957.3" y1="497.3" x2="1161" y2="497.3" stroke="#8e8e8e" stroke-width="2" />
<line x1="949.3" y1="497.3" x2="957.3" y2="497.3" stroke="#c8c8c8" stroke-width="2" />
<text x="948.5" y="504.6" font-size="20.6" fill="#d8d8d8" text-anchor="end">-5</text>
<line x1="957.3" y1="572.2" x2="1161" y2="572.2" stroke="#8e8e8e" stroke-width="2" />
<line x1="949.3" y1="572.2" x2="957.3" y2="572.2" stroke="#c8c8c8" stroke-width="2" />
<text x="948.5" y="579.5" font-size="20.6" fill="#d8d8d8" text-anchor="end">-10</text>
<line x1="949.3" y1="645" x2="957.3" y2="645" stroke="#c8c8c8" stroke-width="2" />
<text x="948.5" y="652.3" font-size="20.6" fill="#d8d8d8" text-anchor="end">-15</text>
<line x1="957.3" y1="197.8" x2="957.3" y2="645" stroke="#8e8e8e" stroke-width="2" />
<line x1="1161" y1="197.8" x2="1161" y2="645" stroke="#8e8e8e" stroke-width="2" />
<rect x="956.3" y="195.9" width="205.7" height="4.3" fill="#8e8e8e"/>
<rect x="956.3" y="642.8" width="205.7" height="3.1" fill="#8e8e8e"/>
<line x1="957.3" y1="645" x2="957.3" y2="653" stroke="#c8c8c8" stroke-width="2" />
<line x1="1161" y1="645" x2="1161" y2="653" stroke="#c8c8c8" stroke-width="2" />
<text x="1040" y="190.2" font-size="20.6" fill="#d8d8d8" text-anchor="middle" textLength="67.5" lengthAdjust="spacingAndGlyphs">Delta C</text>
<text x="1058.5" y="666.8" font-size="20.6" fill="#d8d8d8" text-anchor="middle" textLength="55" lengthAdjust="spacingAndGlyphs">100W</text>
<rect x="978.1" y="408" width="161.1" height="14" fill="url(#gWb)" stroke="#000" stroke-width="2.2"/>
<rect x="1234.6" y="197.8" width="205.2" height="447.2" fill="#252525"/>
<line x1="1226.6" y1="197.8" x2="1234.6" y2="197.8" stroke="#c8c8c8" stroke-width="2" />
<text x="1225.8" y="205.1" font-size="20.6" fill="#d8d8d8" text-anchor="end">15</text>
<line x1="1234.6" y1="274.1" x2="1439.8" y2="274.1" stroke="#8e8e8e" stroke-width="2" />
<line x1="1226.6" y1="274.1" x2="1234.6" y2="274.1" stroke="#c8c8c8" stroke-width="2" />
<text x="1225.8" y="281.4" font-size="20.6" fill="#d8d8d8" text-anchor="end">10</text>
<line x1="1234.6" y1="347.2" x2="1439.8" y2="347.2" stroke="#8e8e8e" stroke-width="2" />
<line x1="1226.6" y1="347.2" x2="1234.6" y2="347.2" stroke="#c8c8c8" stroke-width="2" />
<text x="1225.8" y="354.5" font-size="20.6" fill="#d8d8d8" text-anchor="end">5</text>
<line x1="1234.6" y1="422" x2="1439.8" y2="422" stroke="#8e8e8e" stroke-width="2" />
<line x1="1226.6" y1="422" x2="1234.6" y2="422" stroke="#c8c8c8" stroke-width="2" />
<text x="1225.8" y="429.3" font-size="20.6" fill="#d8d8d8" text-anchor="end">0</text>
<line x1="1234.6" y1="497.3" x2="1439.8" y2="497.3" stroke="#8e8e8e" stroke-width="2" />
<line x1="1226.6" y1="497.3" x2="1234.6" y2="497.3" stroke="#c8c8c8" stroke-width="2" />
<text x="1225.8" y="504.6" font-size="20.6" fill="#d8d8d8" text-anchor="end">-5</text>
<line x1="1234.6" y1="572.2" x2="1439.8" y2="572.2" stroke="#8e8e8e" stroke-width="2" />
<line x1="1226.6" y1="572.2" x2="1234.6" y2="572.2" stroke="#c8c8c8" stroke-width="2" />
<text x="1225.8" y="579.5" font-size="20.6" fill="#d8d8d8" text-anchor="end">-10</text>
<line x1="1226.6" y1="645" x2="1234.6" y2="645" stroke="#c8c8c8" stroke-width="2" />
<text x="1225.8" y="652.3" font-size="20.6" fill="#d8d8d8" text-anchor="end">-15</text>
<line x1="1234.6" y1="197.8" x2="1234.6" y2="645" stroke="#8e8e8e" stroke-width="2" />
<line x1="1439.8" y1="197.8" x2="1439.8" y2="645" stroke="#8e8e8e" stroke-width="2" />
<rect x="1233.6" y="195.9" width="207.2" height="4.3" fill="#8e8e8e"/>
<rect x="1233.6" y="642.8" width="207.2" height="3.1" fill="#8e8e8e"/>
<line x1="1234.6" y1="645" x2="1234.6" y2="653" stroke="#c8c8c8" stroke-width="2" />
<line x1="1439.8" y1="645" x2="1439.8" y2="653" stroke="#c8c8c8" stroke-width="2" />
<text x="1318" y="190.2" font-size="20.6" fill="#d8d8d8" text-anchor="middle" textLength="68.5" lengthAdjust="spacingAndGlyphs">Delta H</text>
<text x="1337.5" y="666.8" font-size="20.6" fill="#d8d8d8" text-anchor="middle" textLength="55" lengthAdjust="spacingAndGlyphs">100W</text>
<line x1="1255.1" y1="422" x2="1418.8" y2="422" stroke="#000" stroke-width="2" />
<rect x="631" y="691" width="836.5" height="230" fill="#000"/>
<rect x="656.2" y="701" width="87.8" height="94" fill="#c0c0c0"/>
<rect x="656.2" y="795" width="87.8" height="93.8" fill="#c0c0c0"/>
<rect x="657.2" y="702" width="85.8" height="185.8" fill="none" stroke="#f0f0f0" stroke-width="2"/>
<text x="699.8" y="910" font-size="17.8" fill="#fff" text-anchor="middle">White</text>
<rect x="758.33" y="701" width="87.8" height="94" fill="#d00020"/>
<rect x="758.33" y="795" width="87.8" height="93.8" fill="#d0001e"/>
<rect x="759.33" y="702" width="85.8" height="185.8" fill="none" stroke="#f0f0f0" stroke-width="2"/>
<text x="801.93" y="910" font-size="17.8" fill="#fff" text-anchor="middle">Red</text>
<rect x="860.46" y="701" width="87.8" height="94" fill="#00c848"/>
<rect x="860.46" y="795" width="87.8" height="93.8" fill="#18c850"/>
<rect x="861.46" y="702" width="85.8" height="185.8" fill="none" stroke="#f0f0f0" stroke-width="2"/>
<text x="904.06" y="910" font-size="17.8" fill="#fff" text-anchor="middle">Green</text>
<rect x="962.59" y="701" width="87.8" height="94" fill="#0e00c4"/>
<rect x="962.59" y="795" width="87.8" height="93.8" fill="#0c08be"/>
<rect x="963.59" y="702" width="85.8" height="185.8" fill="none" stroke="#f0f0f0" stroke-width="2"/>
<text x="1006.19" y="910" font-size="17.8" fill="#fff" text-anchor="middle">Blue</text>
<rect x="1064.72" y="701" width="87.8" height="94" fill="#00c8cc"/>
<rect x="1064.72" y="795" width="87.8" height="93.8" fill="#14c8c8"/>
<rect x="1065.72" y="702" width="85.8" height="185.8" fill="none" stroke="#f0f0f0" stroke-width="2"/>
<text x="1108.32" y="910" font-size="17.8" fill="#fff" text-anchor="middle">Cyan</text>
<rect x="1166.85" y="701" width="87.8" height="94" fill="#d000c4"/>
<rect x="1166.85" y="795" width="87.8" height="93.8" fill="#c800c8"/>
<rect x="1167.85" y="702" width="85.8" height="185.8" fill="none" stroke="#f0f0f0" stroke-width="2"/>
<text x="1210.45" y="910" font-size="17.8" fill="#fff" text-anchor="middle">Magenta</text>
<rect x="1268.98" y="701" width="87.8" height="94" fill="#c4c400"/>
<rect x="1268.98" y="795" width="87.8" height="93.8" fill="#c4c400"/>
<rect x="1269.98" y="702" width="85.8" height="185.8" fill="none" stroke="#f0f0f0" stroke-width="2"/>
<text x="1312.58" y="910" font-size="17.8" fill="#fff" text-anchor="middle">Yellow</text>
<rect x="1371.11" y="701" width="87.8" height="94" fill="#ffffff"/>
<rect x="1371.11" y="795" width="87.8" height="93.8" fill="#ffffff"/>
<rect x="1372.11" y="702" width="85.8" height="185.8" fill="none" stroke="#f0f0f0" stroke-width="2"/>
<text x="1414.71" y="910" font-size="17.8" fill="#fff" text-anchor="middle">100W</text>
<text x="0" y="0" font-size="17.2" fill="#fff" text-anchor="middle" textLength="50" lengthAdjust="spacingAndGlyphs" transform="translate(649.5,742.5) rotate(-90)">Actual</text>
<text x="0" y="0" font-size="17.2" fill="#fff" text-anchor="middle" textLength="48" lengthAdjust="spacingAndGlyphs" transform="translate(649.5,847.5) rotate(-90)">Target</text>
<rect x="1528" y="195" width="916.2" height="695" fill="none" stroke="#9a9a9a" stroke-width="2"/>
<line x1="1519" y1="890" x2="1528" y2="890" stroke="#d0d0d0" stroke-width="2" />
<line x1="1528" y1="890" x2="1528" y2="899" stroke="#d0d0d0" stroke-width="2" />
<text x="1518" y="897.2" font-size="20.6" fill="#d8d8d8" text-anchor="end">0</text>
<text x="1527.5" y="921" font-size="20.6" fill="#d8d8d8" text-anchor="middle">0</text>
<line x1="1519" y1="808" x2="1528" y2="808" stroke="#d0d0d0" stroke-width="2" />
<line x1="1635.8" y1="890" x2="1635.8" y2="899" stroke="#d0d0d0" stroke-width="2" />
<text x="1518" y="815.2" font-size="20.6" fill="#d8d8d8" text-anchor="end" textLength="28.5" lengthAdjust="spacingAndGlyphs">0,1</text>
<text x="1635.3" y="921" font-size="20.6" fill="#d8d8d8" text-anchor="middle" textLength="28.5" lengthAdjust="spacingAndGlyphs">0,1</text>
<line x1="1519" y1="725.6" x2="1528" y2="725.6" stroke="#d0d0d0" stroke-width="2" />
<line x1="1746" y1="890" x2="1746" y2="899" stroke="#d0d0d0" stroke-width="2" />
<text x="1518" y="732.8" font-size="20.6" fill="#d8d8d8" text-anchor="end" textLength="28.5" lengthAdjust="spacingAndGlyphs">0,2</text>
<text x="1745.5" y="921" font-size="20.6" fill="#d8d8d8" text-anchor="middle" textLength="28.5" lengthAdjust="spacingAndGlyphs">0,2</text>
<line x1="1519" y1="642.7" x2="1528" y2="642.7" stroke="#d0d0d0" stroke-width="2" />
<line x1="1853" y1="890" x2="1853" y2="899" stroke="#d0d0d0" stroke-width="2" />
<text x="1518" y="649.9" font-size="20.6" fill="#d8d8d8" text-anchor="end" textLength="28.5" lengthAdjust="spacingAndGlyphs">0,3</text>
<text x="1852.5" y="921" font-size="20.6" fill="#d8d8d8" text-anchor="middle" textLength="28.5" lengthAdjust="spacingAndGlyphs">0,3</text>
<line x1="1519" y1="558.9" x2="1528" y2="558.9" stroke="#d0d0d0" stroke-width="2" />
<line x1="1962.9" y1="890" x2="1962.9" y2="899" stroke="#d0d0d0" stroke-width="2" />
<text x="1518" y="566.1" font-size="20.6" fill="#d8d8d8" text-anchor="end" textLength="28.5" lengthAdjust="spacingAndGlyphs">0,4</text>
<text x="1962.4" y="921" font-size="20.6" fill="#d8d8d8" text-anchor="middle" textLength="28.5" lengthAdjust="spacingAndGlyphs">0,4</text>
<line x1="1519" y1="477.6" x2="1528" y2="477.6" stroke="#d0d0d0" stroke-width="2" />
<line x1="2072.8" y1="890" x2="2072.8" y2="899" stroke="#d0d0d0" stroke-width="2" />
<text x="1518" y="484.8" font-size="20.6" fill="#d8d8d8" text-anchor="end" textLength="28.5" lengthAdjust="spacingAndGlyphs">0,5</text>
<text x="2072.3" y="921" font-size="20.6" fill="#d8d8d8" text-anchor="middle" textLength="28.5" lengthAdjust="spacingAndGlyphs">0,5</text>
<line x1="1519" y1="394.3" x2="1528" y2="394.3" stroke="#d0d0d0" stroke-width="2" />
<line x1="2180" y1="890" x2="2180" y2="899" stroke="#d0d0d0" stroke-width="2" />
<text x="1518" y="401.5" font-size="20.6" fill="#d8d8d8" text-anchor="end" textLength="28.5" lengthAdjust="spacingAndGlyphs">0,6</text>
<text x="2179.5" y="921" font-size="20.6" fill="#d8d8d8" text-anchor="middle" textLength="28.5" lengthAdjust="spacingAndGlyphs">0,6</text>
<line x1="1519" y1="311.7" x2="1528" y2="311.7" stroke="#d0d0d0" stroke-width="2" />
<line x1="2290" y1="890" x2="2290" y2="899" stroke="#d0d0d0" stroke-width="2" />
<text x="1518" y="318.9" font-size="20.6" fill="#d8d8d8" text-anchor="end" textLength="28.5" lengthAdjust="spacingAndGlyphs">0,7</text>
<text x="2289.5" y="921" font-size="20.6" fill="#d8d8d8" text-anchor="middle" textLength="28.5" lengthAdjust="spacingAndGlyphs">0,7</text>
<line x1="1519" y1="229.1" x2="1528" y2="229.1" stroke="#d0d0d0" stroke-width="2" />
<line x1="2399.8" y1="890" x2="2399.8" y2="899" stroke="#d0d0d0" stroke-width="2" />
<text x="1518" y="236.3" font-size="20.6" fill="#d8d8d8" text-anchor="end" textLength="28.5" lengthAdjust="spacingAndGlyphs">0,8</text>
<text x="2399.3" y="921" font-size="20.6" fill="#d8d8d8" text-anchor="middle" textLength="28.5" lengthAdjust="spacingAndGlyphs">0,8</text>
<text x="1967" y="188" font-size="20.6" fill="#d8d8d8" text-anchor="middle" textLength="107" lengthAdjust="spacingAndGlyphs">CIE 1931 xy</text>
<rect x="2083.2" y="845" width="355.3" height="38" fill="#333333"/>
<text x="2084" y="874.5" font-size="27.4" fill="#f0f0f0" textLength="312.5" lengthAdjust="spacingAndGlyphs">Gamut Coverage:  99,5%</text>
<rect x="2258.9" y="614.08" width="19" height="19.2" fill="none" stroke="#f4f4f4" stroke-width="2.1"/>
<rect x="1806.95" y="308.36" width="19" height="19.2" fill="none" stroke="#f4f4f4" stroke-width="2.1"/>
<rect x="1680.5" y="829.84" width="19" height="19.2" fill="none" stroke="#f4f4f4" stroke-width="2.1"/>
<rect x="1736.17" y="605.06" width="19" height="19.2" fill="none" stroke="#f4f4f4" stroke-width="2.1"/>
<rect x="1884.33" y="754.7" width="19" height="19.2" fill="none" stroke="#f4f4f4" stroke-width="2.1"/>
<rect x="1995.85" y="435.25" width="19" height="19.2" fill="none" stroke="#f4f4f4" stroke-width="2.1"/>
<rect x="1859.14" y="608.4" width="19" height="19.2" fill="none" stroke="#000" stroke-width="2.7"/>
<circle cx="2262.99" cy="625.43" r="5.8" fill="#c80808" stroke="#0a0a0a" stroke-width="1.8"/>
<circle cx="1812.84" cy="314.29" r="5.8" fill="rgba(0,255,0,0.2)" stroke="#0a0a0a" stroke-width="1.8"/>
<circle cx="1691.63" cy="840.8" r="5.8" fill="rgba(0,0,255,0.35)" stroke="#0a0a0a" stroke-width="1.8"/>
<circle cx="1744.44" cy="616.22" r="5.8" fill="rgba(0,160,160,0.55)" stroke="#0a0a0a" stroke-width="1.8"/>
<circle cx="1894" cy="764.37" r="5.8" fill="rgba(170,0,170,0.6)" stroke="#0a0a0a" stroke-width="1.8"/>
<circle cx="2005.85" cy="444.98" r="5.8" fill="rgba(190,190,0,0.6)" stroke="#0a0a0a" stroke-width="1.8"/>
<circle cx="1867.52" cy="618.25" r="5.8" fill="rgba(255,255,255,0.5)" stroke="#0a0a0a" stroke-width="1.8"/>
<circle cx="1867.3" cy="618.09" r="5.8" fill="rgba(255,255,255,0.5)" stroke="#0a0a0a" stroke-width="1.8"/>
<rect x="2270" y="324.5" width="19.2" height="18.4" fill="none" stroke="#000" stroke-width="3.6"/>
<circle cx="2277.57" cy="343.46" r="6" fill="rgba(255,255,255,0.75)" stroke="#141414" stroke-width="1.8"/>
<circle cx="2276.22" cy="342.33" r="6" fill="rgba(255,255,255,0.75)" stroke="#141414" stroke-width="1.8"/>
<text x="121.4" y="1022.8" font-size="41.4" fill="#f2f2f2" textLength="309.6" lengthAdjust="spacingAndGlyphs">Current Reading</text>
<text x="121.4" y="1084.2" font-size="35" fill="#f2f2f2" textLength="144.5" lengthAdjust="spacingAndGlyphs">x: 0,3122</text>
<text x="121.4" y="1142.2" font-size="35" fill="#f2f2f2" textLength="146" lengthAdjust="spacingAndGlyphs">y: 0,3275</text>
<text x="121.4" y="1199" font-size="35" fill="#f2f2f2" textLength="157" lengthAdjust="spacingAndGlyphs">fL: 184,46</text>
<text x="121.4" y="1257" font-size="35" fill="#f2f2f2" textLength="225" lengthAdjust="spacingAndGlyphs">cd/m²: 632,01</text>
<text x="760.7" y="987.5" font-size="20.2" fill="#d8d8d8" text-anchor="middle" textLength="117.5" lengthAdjust="spacingAndGlyphs">RGB Balance</text>
<rect x="605.2" y="995" width="354.2" height="255" fill="#252525"/>
<line x1="605.2" y1="1021.7" x2="959.4" y2="1021.7" stroke="#8e8e8e" stroke-width="2" />
<line x1="597.2" y1="1021.7" x2="605.2" y2="1021.7" stroke="#c8c8c8" stroke-width="2" />
<text x="596.2" y="1028.9" font-size="20.6" fill="#d8d8d8" text-anchor="end">104</text>
<line x1="605.2" y1="1074.3" x2="959.4" y2="1074.3" stroke="#8e8e8e" stroke-width="2" />
<line x1="597.2" y1="1074.3" x2="605.2" y2="1074.3" stroke="#c8c8c8" stroke-width="2" />
<text x="596.2" y="1081.5" font-size="20.6" fill="#d8d8d8" text-anchor="end">102</text>
<line x1="605.2" y1="1124" x2="959.4" y2="1124" stroke="#8e8e8e" stroke-width="2" />
<line x1="597.2" y1="1124" x2="605.2" y2="1124" stroke="#c8c8c8" stroke-width="2" />
<text x="596.2" y="1131.2" font-size="20.6" fill="#d8d8d8" text-anchor="end">100</text>
<line x1="605.2" y1="1175.9" x2="959.4" y2="1175.9" stroke="#8e8e8e" stroke-width="2" />
<line x1="597.2" y1="1175.9" x2="605.2" y2="1175.9" stroke="#c8c8c8" stroke-width="2" />
<text x="596.2" y="1183.1" font-size="20.6" fill="#d8d8d8" text-anchor="end">98</text>
<line x1="605.2" y1="1225.4" x2="959.4" y2="1225.4" stroke="#8e8e8e" stroke-width="2" />
<line x1="597.2" y1="1225.4" x2="605.2" y2="1225.4" stroke="#c8c8c8" stroke-width="2" />
<text x="596.2" y="1232.6" font-size="20.6" fill="#d8d8d8" text-anchor="end">96</text>
<rect x="605.2" y="995" width="354.2" height="255" fill="none" stroke="#8e8e8e" stroke-width="2"/>
<line x1="605.2" y1="1250" x2="605.2" y2="1258" stroke="#c8c8c8" stroke-width="2" />
<line x1="959.4" y1="1250" x2="959.4" y2="1258" stroke="#c8c8c8" stroke-width="2" />
<text x="782.4" y="1273.3" font-size="20.6" fill="#d8d8d8" text-anchor="middle" textLength="55" lengthAdjust="spacingAndGlyphs">100W</text>
<rect x="639.2" y="1121.3" width="93.6" height="127.7" fill="#000"/>
<rect x="640.9" y="1123.3" width="90.2" height="125.7" fill="url(#grb0)"/>
<rect x="733.4" y="1125.4" width="94.5" height="123.6" fill="#000"/>
<rect x="735.1" y="1127.4" width="91.1" height="121.6" fill="url(#grb1)"/>
<rect x="827.4" y="1111" width="94.3" height="138" fill="#000"/>
<rect x="829.1" y="1113" width="90.9" height="136" fill="url(#grb2)"/>
<line x1="605.2" y1="1250" x2="959.4" y2="1250" stroke="#8e8e8e" stroke-width="2" />
<rect x="987" y="960.2" width="988.2" height="313.2" fill="#050505"/>
<rect x="989.1" y="962.5" width="983.9" height="55" fill="url(#gTh)"/>
<rect x="989.1" y="1017.5" width="983.9" height="51.1" fill="#434343"/>
<rect x="989.1" y="1068.6" width="983.9" height="51.2" fill="#7c7c7c"/>
<rect x="989.1" y="1119.8" width="983.9" height="51.2" fill="#434343"/>
<rect x="989.1" y="1171" width="983.9" height="51.4" fill="#7c7c7c"/>
<rect x="989.1" y="1222.4" width="983.9" height="51" fill="#434343"/>
<text x="1174.7" y="1002.4" font-size="30.5" fill="#f4f4f4" text-anchor="middle" textLength="59" lengthAdjust="spacingAndGlyphs">White</text>
<text x="1277.4" y="1002.4" font-size="30.5" fill="#f4f4f4" text-anchor="middle" textLength="37.5" lengthAdjust="spacingAndGlyphs">Red</text>
<text x="1380.9" y="1002.4" font-size="30.5" fill="#f4f4f4" text-anchor="middle" textLength="60.5" lengthAdjust="spacingAndGlyphs">Green</text>
<text x="1484.4" y="1002.4" font-size="30.5" fill="#f4f4f4" text-anchor="middle" textLength="43.5" lengthAdjust="spacingAndGlyphs">Blue</text>
<text x="1587.5" y="1002.4" font-size="30.5" fill="#f4f4f4" text-anchor="middle" textLength="48.5" lengthAdjust="spacingAndGlyphs">Cyan</text>
<text x="1697.7" y="1002.4" font-size="30.5" fill="#f4f4f4" text-anchor="middle" textLength="87.5" lengthAdjust="spacingAndGlyphs">Magenta</text>
<text x="1807.6" y="1002.4" font-size="30.5" fill="#f4f4f4" text-anchor="middle" textLength="63" lengthAdjust="spacingAndGlyphs">Yellow</text>
<text x="1917" y="1002.4" font-size="30.5" fill="#f4f4f4" text-anchor="middle" textLength="58" lengthAdjust="spacingAndGlyphs">100W</text>
<text x="1007" y="1055.6" font-size="31" fill="#f4f4f4" font-weight="bold" textLength="90" lengthAdjust="spacingAndGlyphs">x: CIE31</text>
<text x="1126.8" y="1055.6" font-size="31.5" fill="#f0f0f0" textLength="70.6" lengthAdjust="spacingAndGlyphs">0,3124</text>
<text x="1236.3" y="1055.6" font-size="31.5" fill="#f0f0f0" textLength="70.6" lengthAdjust="spacingAndGlyphs">0,6754</text>
<text x="1333.2" y="1055.6" font-size="31.5" fill="#f0f0f0" textLength="70.6" lengthAdjust="spacingAndGlyphs">0,2627</text>
<text x="1442.7" y="1055.6" font-size="31.5" fill="#f0f0f0" textLength="70.6" lengthAdjust="spacingAndGlyphs">0,1503</text>
<text x="1539.5" y="1055.6" font-size="31.5" fill="#f0f0f0" textLength="70.6" lengthAdjust="spacingAndGlyphs">0,1982</text>
<text x="1649.8" y="1055.6" font-size="31.5" fill="#f0f0f0" textLength="70.6" lengthAdjust="spacingAndGlyphs">0,3356</text>
<text x="1759.8" y="1055.6" font-size="31.5" fill="#f0f0f0" textLength="70.6" lengthAdjust="spacingAndGlyphs">0,4383</text>
<text x="1869.7" y="1055.6" font-size="31.5" fill="#f0f0f0" textLength="70.6" lengthAdjust="spacingAndGlyphs">0,3122</text>
<text x="1007" y="1106.8" font-size="31" fill="#f4f4f4" font-weight="bold" textLength="90" lengthAdjust="spacingAndGlyphs">y: CIE31</text>
<text x="1126.8" y="1106.8" font-size="31.5" fill="#f0f0f0" textLength="70.6" lengthAdjust="spacingAndGlyphs">0,3273</text>
<text x="1236.3" y="1106.8" font-size="31.5" fill="#f0f0f0" textLength="70.6" lengthAdjust="spacingAndGlyphs">0,3183</text>
<text x="1333.2" y="1106.8" font-size="31.5" fill="#f0f0f0" textLength="70.6" lengthAdjust="spacingAndGlyphs">0,6959</text>
<text x="1442.7" y="1106.8" font-size="31.5" fill="#f0f0f0" textLength="70.6" lengthAdjust="spacingAndGlyphs">0,0586</text>
<text x="1539.5" y="1106.8" font-size="31.5" fill="#f0f0f0" textLength="70.6" lengthAdjust="spacingAndGlyphs">0,3294</text>
<text x="1649.8" y="1106.8" font-size="31.5" fill="#f0f0f0" textLength="70.6" lengthAdjust="spacingAndGlyphs">0,1504</text>
<text x="1759.8" y="1106.8" font-size="31.5" fill="#f0f0f0" textLength="70.6" lengthAdjust="spacingAndGlyphs">0,5361</text>
<text x="1869.7" y="1106.8" font-size="31.5" fill="#f0f0f0" textLength="70.6" lengthAdjust="spacingAndGlyphs">0,3275</text>
<text x="1007" y="1157.8" font-size="31" fill="#f4f4f4" font-weight="bold" textLength="13.5" lengthAdjust="spacingAndGlyphs">Y</text>
<text x="1126.8" y="1157.8" font-size="31.5" fill="#f0f0f0" textLength="96.3" lengthAdjust="spacingAndGlyphs">333,6997</text>
<text x="1236.3" y="1157.8" font-size="31.5" fill="#f0f0f0" textLength="83.5" lengthAdjust="spacingAndGlyphs">76,7651</text>
<text x="1333.2" y="1157.8" font-size="31.5" fill="#f0f0f0" textLength="96.3" lengthAdjust="spacingAndGlyphs">228,2620</text>
<text x="1442.7" y="1157.8" font-size="31.5" fill="#f0f0f0" textLength="83.5" lengthAdjust="spacingAndGlyphs">26,0224</text>
<text x="1539.5" y="1157.8" font-size="31.5" fill="#f0f0f0" textLength="96.3" lengthAdjust="spacingAndGlyphs">255,2824</text>
<text x="1649.8" y="1157.8" font-size="31.5" fill="#f0f0f0" textLength="96.3" lengthAdjust="spacingAndGlyphs">103,1655</text>
<text x="1759.8" y="1157.8" font-size="31.5" fill="#f0f0f0" textLength="96.3" lengthAdjust="spacingAndGlyphs">305,4080</text>
<text x="1869.7" y="1157.8" font-size="31.5" fill="#f0f0f0" textLength="96.3" lengthAdjust="spacingAndGlyphs">632,0126</text>
<text x="1007" y="1208.8" font-size="31" fill="#f4f4f4" font-weight="bold" textLength="94" lengthAdjust="spacingAndGlyphs">Target Y</text>
<text x="1126.8" y="1208.8" font-size="31.5" fill="#f0f0f0" textLength="96.3" lengthAdjust="spacingAndGlyphs">329,2758</text>
<text x="1236.3" y="1208.8" font-size="31.5" fill="#f0f0f0" textLength="83.5" lengthAdjust="spacingAndGlyphs">75,4005</text>
<text x="1333.2" y="1208.8" font-size="31.5" fill="#f0f0f0" textLength="96.3" lengthAdjust="spacingAndGlyphs">227,7702</text>
<text x="1442.7" y="1208.8" font-size="31.5" fill="#f0f0f0" textLength="83.5" lengthAdjust="spacingAndGlyphs">26,1051</text>
<text x="1539.5" y="1208.8" font-size="31.5" fill="#f0f0f0" textLength="96.3" lengthAdjust="spacingAndGlyphs">253,8753</text>
<text x="1649.8" y="1208.8" font-size="31.5" fill="#f0f0f0" textLength="96.3" lengthAdjust="spacingAndGlyphs">101,5056</text>
<text x="1759.8" y="1208.8" font-size="31.5" fill="#f0f0f0" textLength="96.3" lengthAdjust="spacingAndGlyphs">303,1707</text>
<text x="1869.7" y="1208.8" font-size="31.5" fill="#f0f0f0" textLength="96.3" lengthAdjust="spacingAndGlyphs">632,0126</text>
<text x="1007" y="1259.8" font-size="31" fill="#f4f4f4" font-weight="bold" textLength="93" lengthAdjust="spacingAndGlyphs">ΔE 2000</text>
<text x="1126.8" y="1259.8" font-size="31.5" fill="#f0f0f0" textLength="70.6" lengthAdjust="spacingAndGlyphs">1,0615</text>
<text x="1236.3" y="1259.8" font-size="31.5" fill="#f0f0f0" textLength="70.6" lengthAdjust="spacingAndGlyphs">1,2013</text>
<text x="1333.2" y="1259.8" font-size="31.5" fill="#f0f0f0" textLength="70.6" lengthAdjust="spacingAndGlyphs">0,3514</text>
<text x="1442.7" y="1259.8" font-size="31.5" fill="#f0f0f0" textLength="70.6" lengthAdjust="spacingAndGlyphs">0,4842</text>
<text x="1539.5" y="1259.8" font-size="31.5" fill="#f0f0f0" textLength="70.6" lengthAdjust="spacingAndGlyphs">0,4664</text>
<text x="1649.8" y="1259.8" font-size="31.5" fill="#f0f0f0" textLength="70.6" lengthAdjust="spacingAndGlyphs">0,4109</text>
<text x="1759.8" y="1259.8" font-size="31.5" fill="#f0f0f0" textLength="70.6" lengthAdjust="spacingAndGlyphs">0,2199</text>
<text x="1869.7" y="1259.8" font-size="31.5" fill="#f0f0f0" textLength="70.6" lengthAdjust="spacingAndGlyphs">0,9623</text>
<rect x="0" y="1287" width="2547" height="93" fill="url(#gBar)"/>
<rect x="0" y="1377.7" width="2075" height="2.4" fill="#232323"/>
<path d="M2,1372.7 V1292 a5,5 0 0 1 5,-5 H221.5 a5,5 0 0 1 5,5 V1372.7 a5,5 0 0 1 -5,5 H7 a5,5 0 0 1 -5,-5Z" fill="url(#gCb)"/>
<rect x="9.8" y="1294.6" width="209.2" height="54" fill="#c0c0c0" stroke="rgba(255,255,255,0.45)" stroke-width="1.2" rx="4.5"/>
<text x="114.25" y="1372.2" font-size="16.2" fill="#262626" text-anchor="middle" font-weight="bold">White</text>
<path d="M229.93,1372.7 V1292 a5,5 0 0 1 5,-5 H449.43 a5,5 0 0 1 5,5 V1372.7 a5,5 0 0 1 -5,5 H234.93 a5,5 0 0 1 -5,-5Z" fill="url(#gCb)"/>
<rect x="237.73" y="1294.6" width="209.2" height="54" fill="#c00000" stroke="rgba(0,0,0,0.18)" stroke-width="1.2" rx="4.5"/>
<text x="342.18" y="1372.2" font-size="16.2" fill="#262626" text-anchor="middle" font-weight="bold">Red</text>
<path d="M457.86,1372.7 V1292 a5,5 0 0 1 5,-5 H677.36 a5,5 0 0 1 5,5 V1372.7 a5,5 0 0 1 -5,5 H462.86 a5,5 0 0 1 -5,-5Z" fill="url(#gCb)"/>
<rect x="465.66" y="1294.6" width="209.2" height="54" fill="#00c000" stroke="rgba(0,0,0,0.18)" stroke-width="1.2" rx="4.5"/>
<text x="570.11" y="1372.2" font-size="16.2" fill="#262626" text-anchor="middle" font-weight="bold">Green</text>
<path d="M685.79,1372.7 V1292 a5,5 0 0 1 5,-5 H905.29 a5,5 0 0 1 5,5 V1372.7 a5,5 0 0 1 -5,5 H690.79 a5,5 0 0 1 -5,-5Z" fill="url(#gCb)"/>
<rect x="693.59" y="1294.6" width="209.2" height="54" fill="#0000c0" stroke="rgba(0,0,0,0.18)" stroke-width="1.2" rx="4.5"/>
<text x="798.04" y="1372.2" font-size="16.2" fill="#262626" text-anchor="middle" font-weight="bold">Blue</text>
<path d="M913.72,1372.7 V1292 a5,5 0 0 1 5,-5 H1133.22 a5,5 0 0 1 5,5 V1372.7 a5,5 0 0 1 -5,5 H918.72 a5,5 0 0 1 -5,-5Z" fill="url(#gCb)"/>
<rect x="921.52" y="1294.6" width="209.2" height="54" fill="#00c0c0" stroke="rgba(0,0,0,0.18)" stroke-width="1.2" rx="4.5"/>
<text x="1025.97" y="1372.2" font-size="16.2" fill="#262626" text-anchor="middle" font-weight="bold">Cyan</text>
<path d="M1141.65,1372.7 V1292 a5,5 0 0 1 5,-5 H1361.15 a5,5 0 0 1 5,5 V1372.7 a5,5 0 0 1 -5,5 H1146.65 a5,5 0 0 1 -5,-5Z" fill="url(#gCb)"/>
<rect x="1149.45" y="1294.6" width="209.2" height="54" fill="#c000c0" stroke="rgba(0,0,0,0.18)" stroke-width="1.2" rx="4.5"/>
<text x="1253.9" y="1372.2" font-size="16.2" fill="#262626" text-anchor="middle" font-weight="bold">Magenta</text>
<path d="M1369.58,1372.7 V1292 a5,5 0 0 1 5,-5 H1589.08 a5,5 0 0 1 5,5 V1372.7 a5,5 0 0 1 -5,5 H1374.58 a5,5 0 0 1 -5,-5Z" fill="url(#gCb)"/>
<rect x="1377.38" y="1294.6" width="209.2" height="54" fill="#c0c000" stroke="rgba(0,0,0,0.18)" stroke-width="1.2" rx="4.5"/>
<text x="1481.83" y="1372.2" font-size="16.2" fill="#262626" text-anchor="middle" font-weight="bold">Yellow</text>
<path d="M1597.51,1372.7 V1292 a5,5 0 0 1 5,-5 H1817.01 a5,5 0 0 1 5,5 V1372.7 a5,5 0 0 1 -5,5 H1602.51 a5,5 0 0 1 -5,-5Z" fill="url(#gCbSel)"/>
<rect x="1605.31" y="1294.6" width="209.2" height="54" fill="#ffffff" stroke="rgba(255,255,255,0.45)" stroke-width="1.2" rx="4.5"/>
<text x="1709.76" y="1372.2" font-size="16.2" fill="#ffffff" text-anchor="middle" font-weight="bold">100W</text>
<path d="M2075.2,1314 V1292 a5,5 0 0 1 5,-5 H2142.8 a5,5 0 0 1 5,5 V1314Z" fill="url(#gCt)"/>
<circle cx="2111.5" cy="1300.5" r="11.5" fill="url(#gKn)"/>
<path d="M2104.3,1302.8 h14.4 l-7.2,-6.6z" fill="#333"/>
<path d="M2075.2,1315.6 H2147.8 V1372.8 a5,5 0 0 1 -5,5 H2080.2 a5,5 0 0 1 -5,-5Z" fill="url(#gCt)"/>
<rect x="2090" y="1325.2" width="43.4" height="42.6" fill="url(#gSq)" stroke="#1c1c1c" stroke-width="3.2" rx="5"/>
<rect x="2101" y="1337" width="21" height="20" fill="#000"/>
<rect x="2488" y="1287" width="60" height="46.6" fill="#313131"/>
<rect x="2149.3" y="1287" width="68.1" height="45.4" fill="url(#gCt)"/>
<circle cx="2183.35" cy="1309.6" r="15" fill="url(#gKn)"/>
<rect x="2177.35" y="1303.6" width="12" height="12" fill="#333"/>
<rect x="2219.2" y="1287" width="65.7" height="45.4" fill="url(#gCt)"/>
<circle cx="2252.05" cy="1309.6" r="15" fill="url(#gKn)"/>
<path d="M2246.55,1302 v15.4 l13.4,-7.7z" fill="#333"/>
<rect x="2286.7" y="1287" width="65.8" height="45.4" fill="url(#gCtD)"/>
<circle cx="2319.6" cy="1309.6" r="15" fill="url(#gDrop)"/>
<g fill="#2a2a2a"><path d="M2311,1303 h5.6 v1.8 h-2 v4.3 l-1,1.1 l1,1.1 v4.3 h2 v1.8 h-5.6 v-6.4 l-0.9,-0.8 l0.9,-0.8z"/><path d="M2328.2,1303 h-5.6 v1.8 h2 v4.3 l1,1.1 l-1,1.1 v4.3 h-2 v1.8 h5.6 v-6.4 l0.9,-0.8 l-0.9,-0.8z"/><circle cx="2317.3" cy="1309.3" r="1.3"/><circle cx="2321.9" cy="1309.3" r="1.3"/></g>
<rect x="2354.3" y="1287" width="65.8" height="45.4" fill="url(#gCt)"/>
<circle cx="2387.2" cy="1309.6" r="15" fill="url(#gKn)"/>
<path d="M2387.2,1309.4 c-3,-4.4 -9,-4.4 -9,0 c0,4.4 6,4.4 9,0 c3,-4.4 9,-4.4 9,0 c0,4.4 -6,4.4 -9,0z" fill="none" stroke="#303030" stroke-width="3"/>
<rect x="2421.9" y="1287" width="66.1" height="45.4" fill="url(#gCt)"/>
<circle cx="2454.95" cy="1309.6" r="15" fill="url(#gKn)"/>
<g transform="translate(2455.55,1310.2)"><path d="M-6.6,-0.6 a6.7,6.7 0 0 1 11.2,-4.2 M6.6,0.6 a6.7,6.7 0 0 1 -11.2,4.2" fill="none" stroke="#303030" stroke-width="3.3"/><path d="M8.6,-9.6 v7.4 h-7.4z M-8.6,9.6 v-7.4 h7.4z" fill="#303030"/></g>
<g transform="translate(2522,1309)" fill="#5a0808" opacity="0.7"><path d="M-3.4,0 L-5.3,-19.4 H5.3 L3.4,0 L5.3,19.4 H-5.3Z" transform="rotate(0)"/><path d="M-3.4,0 L-5.3,-19.4 H5.3 L3.4,0 L5.3,19.4 H-5.3Z" transform="rotate(60)"/><path d="M-3.4,0 L-5.3,-19.4 H5.3 L3.4,0 L5.3,19.4 H-5.3Z" transform="rotate(120)"/></g>
<g transform="translate(2520.8,1307.6)" fill="#f00a0a"><path d="M-3.4,0 L-5.3,-19.4 H5.3 L3.4,0 L5.3,19.4 H-5.3Z" transform="rotate(0)"/><path d="M-3.4,0 L-5.3,-19.4 H5.3 L3.4,0 L5.3,19.4 H-5.3Z" transform="rotate(60)"/><path d="M-3.4,0 L-5.3,-19.4 H5.3 L3.4,0 L5.3,19.4 H-5.3Z" transform="rotate(120)"/></g>
<path d="M2149.3,1377.6 V1337.6 a4,4 0 0 1 4,-4 H2352.7 V1377.6Z" fill="url(#gCtB)"/>
<rect x="2354.3" y="1333.6" width="194" height="44" fill="url(#gCtB)"/>
<rect x="2148" y="1377.6" width="400" height="3" fill="#242424"/>
<circle cx="2195" cy="1356" r="14.5" fill="url(#gKn)"/>
<circle cx="2514.4" cy="1356" r="14.5" fill="url(#gKn)"/>
<path d="M2194,1349.5 l-5.4,6.5 l5.4,6.5 M2201,1349.5 l-5.4,6.5 l5.4,6.5" fill="none" stroke="#333" stroke-width="2.6"/>
<path d="M2508.4,1349.5 l5.4,6.5 l-5.4,6.5 M2515.4,1349.5 l5.4,6.5 l-5.4,6.5" fill="none" stroke="#333" stroke-width="2.6"/>
<text x="2235.2" y="1368.2" font-size="32.5" fill="#383838" textLength="75.8" lengthAdjust="spacingAndGlyphs" filter="url(#blur1)" stroke="#383838" stroke-width="0.9">Back</text>
<text x="2395.2" y="1368.2" font-size="32.5" fill="#383838" textLength="78.4" lengthAdjust="spacingAndGlyphs" filter="url(#blur1)" stroke="#383838" stroke-width="0.9">Next</text>
</svg>
</body></html>
